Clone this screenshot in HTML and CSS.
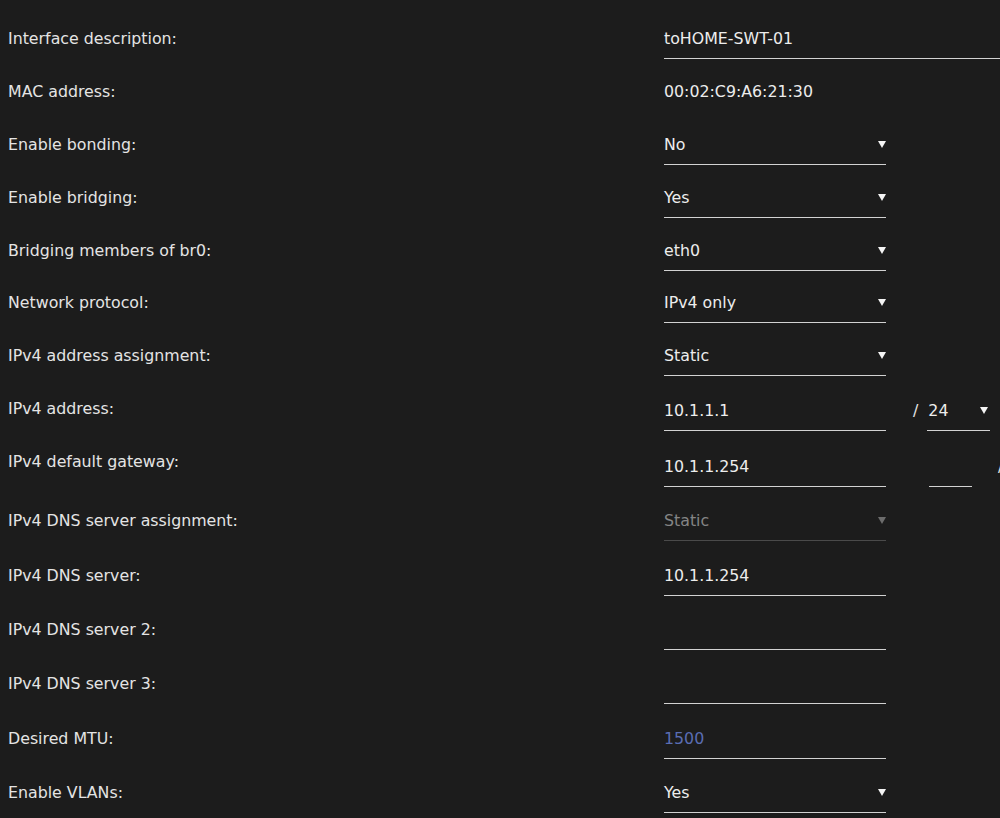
FILE: index.html
```html
<!DOCTYPE html>
<html lang="en">
<head>
<meta charset="utf-8">
<title>Interface settings</title>
<link rel="stylesheet" href="styles.css">
</head>
<body>
<div class="form">
  <div class="row">
    <div class="label">Interface description:</div>
    <div class="value"><div class="field field-wide">toHOME-SWT-01</div></div>
  </div>
  <div class="row">
    <div class="label">MAC address:</div>
    <div class="value"><div class="static-text">00:02:C9:A6:21:30</div></div>
  </div>
  <div class="row">
    <div class="label">Enable bonding:</div>
    <div class="value"><div class="field select"><span>No</span><span class="caret"></span></div></div>
  </div>
  <div class="row">
    <div class="label">Enable bridging:</div>
    <div class="value"><div class="field select"><span>Yes</span><span class="caret"></span></div></div>
  </div>
  <div class="row">
    <div class="label">Bridging members of br0:</div>
    <div class="value"><div class="field select"><span>eth0</span><span class="caret"></span></div></div>
  </div>
  <div class="row">
    <div class="label">Network protocol:</div>
    <div class="value"><div class="field select"><span>IPv4 only</span><span class="caret"></span></div></div>
  </div>
  <div class="row">
    <div class="label">IPv4 address assignment:</div>
    <div class="value"><div class="field select"><span>Static</span><span class="caret"></span></div></div>
  </div>
  <div class="row">
    <div class="label">IPv4 address:</div>
    <div class="value value-shift">
      <div class="field">10.1.1.1</div>
      <span class="slash slash-prefix">/</span>
      <div class="field select field-mask"><span>24</span><span class="caret"></span></div>
    </div>
  </div>
  <div class="row row-gw">
    <div class="label">IPv4 default gateway:</div>
    <div class="value value-shift-lg">
      <div class="field">10.1.1.254</div>
      <div class="field field-metric"></div>
      <span class="slash slash-tail">/</span>
    </div>
  </div>
  <div class="row row-lg">
    <div class="label">IPv4 DNS server assignment:</div>
    <div class="value"><div class="field select disabled"><span>Static</span><span class="caret"></span></div></div>
  </div>
  <div class="row row-lg">
    <div class="label">IPv4 DNS server:</div>
    <div class="value"><div class="field">10.1.1.254</div></div>
  </div>
  <div class="row row-lg">
    <div class="label">IPv4 DNS server 2:</div>
    <div class="value"><div class="field"></div></div>
  </div>
  <div class="row row-lg">
    <div class="label">IPv4 DNS server 3:</div>
    <div class="value"><div class="field"></div></div>
  </div>
  <div class="row row-lg">
    <div class="label">Desired MTU:</div>
    <div class="value"><div class="field placeholder">1500</div></div>
  </div>
  <div class="row row-lg">
    <div class="label">Enable VLANs:</div>
    <div class="value"><div class="field select"><span>Yes</span><span class="caret"></span></div></div>
  </div>
</div>
</body>
</html>
```
FILE: styles.css
```css
html, body {
  overflow: hidden;
}
body {
  margin: 0;
  padding: 0 0 0 8px;
  background: #1c1c1c;
  color: #e4e4e4;
  font-family: "DejaVu Sans", Verdana, sans-serif;
  font-size: 15.8px;
}
.form {
  padding-top: 29px;
}
.row {
  display: grid;
  grid-template-columns: 656px 1fr;
  align-items: start;
  height: 52.9px;
}
.row-gw {
  height: 59px;
}
.row-lg {
  height: 54.4px;
}
.label {
  line-height: 20px;
  white-space: nowrap;
}
.value {
  display: flex;
  align-items: flex-start;
  white-space: nowrap;
}
.value-shift {
  margin-top: 2px;
}
.value-shift-lg {
  margin-top: 5px;
}
.static-text {
  line-height: 20px;
  color: #ececec;
}
.field {
  box-sizing: content-box;
  width: 222px;
  height: 20px;
  line-height: 20px;
  padding-bottom: 9px;
  border-bottom: 1px solid #d2d2d2;
  color: #ededed;
  flex: none;
}
.field-wide {
  width: 420px;
}
.select {
  display: flex;
  justify-content: space-between;
  align-items: center;
}
.caret {
  width: 0;
  height: 0;
  border-left: 4px solid transparent;
  border-right: 4px solid transparent;
  border-top: 7px solid #f4f4f4;
  margin-top: -1px;
}
.disabled {
  color: #858585;
  border-bottom-color: #4a4a4a;
}
.disabled .caret {
  border-top-color: #6c6c6c;
}
.placeholder {
  color: #5a6db3;
}
.slash {
  line-height: 20px;
  color: #e4e4e4;
}
.slash-prefix {
  margin-left: 27px;
}
.field-mask {
  margin-left: 9px;
  padding-left: 1px;
  padding-right: 2px;
  width: 60px;
}
.field-metric {
  width: 43px;
  margin-left: 43px;
}
.slash-tail {
  margin-left: 26px;
}
```
